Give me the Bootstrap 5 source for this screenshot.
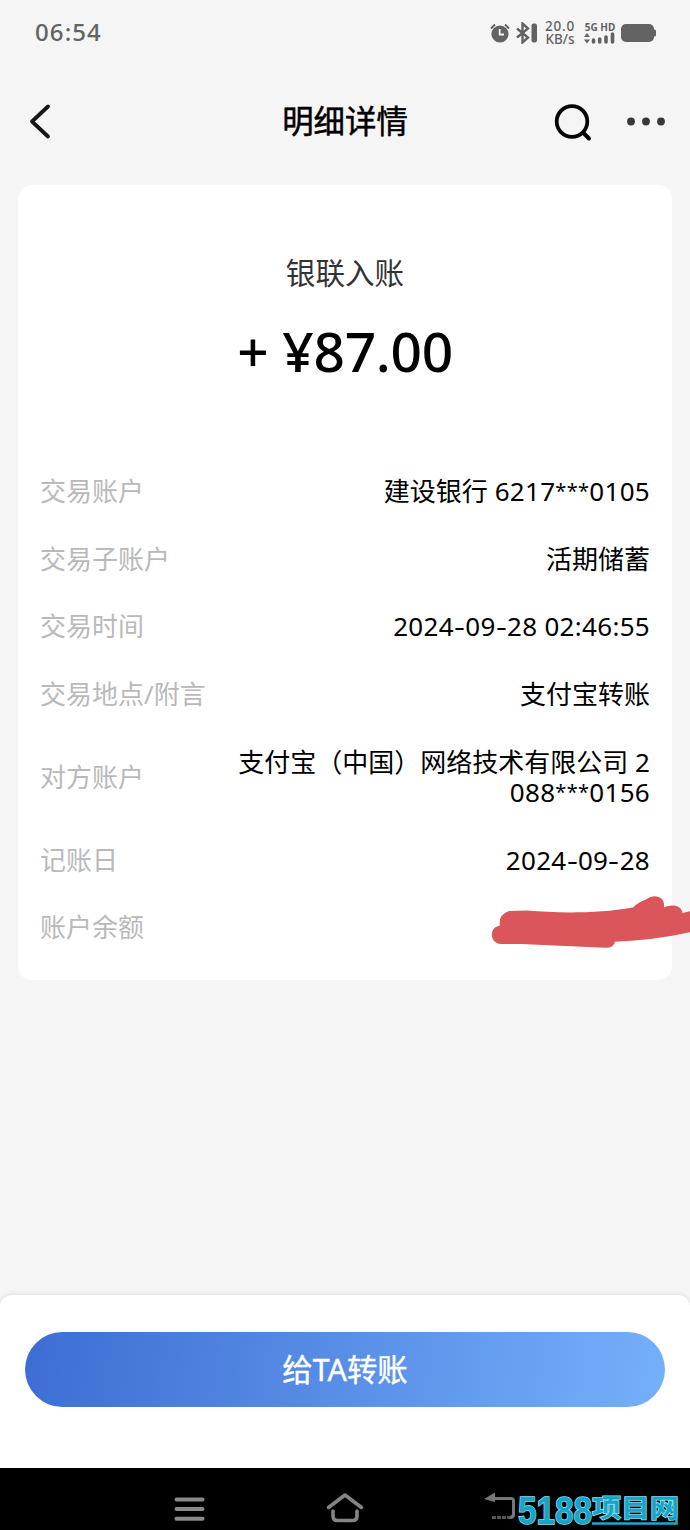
<!DOCTYPE html>
<html lang="zh-CN">
<head>
<meta charset="utf-8">
<meta name="viewport" content="width=device-width, initial-scale=1">
<title>明细详情</title>
<link href="https://cdn.jsdelivr.net/npm/bootstrap@5.3.0/dist/css/bootstrap.min.css" rel="stylesheet">
<style>
body{background:#f5f5f5;color:#000;font-family:"Noto Sans","Noto Sans CJK SC",sans-serif;font-size:26px;line-height:30.5px}
svg{display:block;flex:none}
.screen{height:1530px}
.status-bar{height:65px;padding:0 33px 0 35px;color:#636363}
.clock{font-size:24px;font-weight:500;letter-spacing:1.1px}
.speed{font-size:13.5px;line-height:12.5px;font-weight:500;width:34px}
.speed div:first-child{letter-spacing:.8px}
.net{font:700 10px/10px "Noto Sans",sans-serif;width:34px}
.title-bar{height:120px;padding:0 23px 0 28px}
.page-title{font-size:31.4px;font-weight:400;line-height:40px;top:36px;-webkit-text-stroke:.5px #000}
.detail{width:654px;height:795px;border:0;border-radius:14px;padding:67px 22px 0}
.kind{font-size:29.6px;line-height:42px;color:#333}
.amount{font-size:55px;line-height:70px;font-weight:500;margin-top:22px;white-space:pre;letter-spacing:-.3px}
.rows{margin-top:71.7px}
.item{padding:18.55px 0}
.item dt{font-weight:400;color:#b9b9b9}
.item dd{margin:0;white-space:nowrap}
.num{letter-spacing:.3px}
.num i{font-style:normal;font-size:20px;line-height:1;position:relative;top:-3px}
.num b{font-weight:400;display:inline-block;width:11.4px;text-align:center;transform:scaleX(1.3)}
.scribble{left:473px;top:711px}
.action{height:173px;border-radius:12px 12px 0 0;padding:37px 25px 0;box-shadow:0 -1px 5px rgba(0,0,0,.09)}
.transfer{height:75px;font-size:30.400px;line-height:40px;padding:0;color:#fff;background:linear-gradient(98deg,#3d6dd3,#75b0fb);border:0;-webkit-text-stroke:.4px #fff}
.keys{height:62px}
.brand{left:517px;top:23px}
</style>
</head>
<body>
<div class="screen d-flex flex-column position-relative overflow-hidden">
  <header class="status-bar d-flex align-items-center justify-content-between">
    <span class="clock">06:54</span>
    <div class="d-flex align-items-center">
      <svg width="20" height="20" viewBox="0 0 20 20"><circle cx="10" cy="11" r="8.600" fill="currentColor"/><path d="M1 5.500 5 1.500M19 5.500 15 1.500" stroke="currentColor" stroke-width="2"/><path d="M9.700 6v5.500H14" fill="none" stroke="#f5f5f5" stroke-width="1.800"/></svg>
      <svg style="margin-left:5px" width="23" height="22" viewBox="0 0 23 22"><path d="m2 6.500 11 9-5.500 5V1.500l5.500 5-11 9" fill="none" stroke="currentColor" stroke-width="2.400"/><rect x="16.500" y="1.500" width="5.500" height="19" rx="2" fill="currentColor"/></svg>
      <div class="speed text-center" style="margin-left:5px"><div>20.0</div><div>KB/s</div></div>
      <div class="net" style="margin:0 4px 0 6px"><div class="text-nowrap text-center">5G HD</div>
        <svg width="34" height="12" viewBox="0 0 34 12"><path d="m1 5 3-4 3 4ZM1 7.500h6l-3 4Z" fill="currentColor"/><path d="M10.500 8v2M16.700 7v3M23 5v5M29.500 2v8" stroke="currentColor" stroke-width="3.600" stroke-linecap="round"/></svg></div>
      <svg width="36" height="20" viewBox="0 0 36 20"><rect x="0" y="1" width="33" height="18" rx="5" fill="currentColor"/><rect x="31" y="6.500" width="4" height="7" rx="1.500" fill="currentColor"/></svg>
    </div>
  </header>
  <nav class="title-bar d-flex align-items-start position-relative">
    <svg style="margin-top:37px" width="24" height="38" viewBox="0 0 24 38"><path d="M20 4.500 4 19.500 20 34.500" fill="none" stroke="#171717" stroke-width="3.800" stroke-linecap="round" stroke-linejoin="round"/></svg>
    <h1 class="page-title position-absolute start-0 end-0 text-center mb-0">明细详情</h1>
    <svg class="ms-auto" style="margin-top:37px" width="40" height="40" viewBox="0 0 40 40"><circle cx="20" cy="19.500" r="15.300" fill="none" stroke="#050505" stroke-width="3.800"/><path d="m31.500 31 5.500 5.500" stroke="#050505" stroke-width="4" stroke-linecap="round"/></svg>
    <svg style="margin:51px 0 0 33px" width="42" height="12" viewBox="0 0 42 12"><g fill="#383838"><circle cx="6" cy="5.500" r="3.900"/><circle cx="21" cy="5.500" r="3.900"/><circle cx="36" cy="5.500" r="3.900"/></g></svg>
  </nav>
  <main class="detail card mx-auto">
    <div class="kind text-center">银联入账</div>
    <div class="amount text-center">+ ¥87.00</div>
    <dl class="rows mb-0">
      <div class="item d-flex justify-content-between align-items-center"><dt>交易账户</dt><dd>建设银行 <span class="num">6217<i>***</i>0105</span></dd></div>
      <div class="item d-flex justify-content-between align-items-center"><dt>交易子账户</dt><dd>活期储蓄</dd></div>
      <div class="item d-flex justify-content-between align-items-center"><dt>交易时间</dt><dd><span class="num">2024<b>-</b>09<b>-</b>28 02:46:55</span></dd></div>
      <div class="item d-flex justify-content-between align-items-center"><dt>交易地点/附言</dt><dd>支付宝转账</dd></div>
      <div class="item d-flex justify-content-between align-items-center"><dt>对方账户</dt><dd class="text-end">支付宝（中国）网络技术有限公司 2<br><span class="num">088<i>***</i>0156</span></dd></div>
      <div class="item d-flex justify-content-between align-items-center"><dt>记账日</dt><dd><span class="num">2024<b>-</b>09<b>-</b>28</span></dd></div>
      <div class="item d-flex justify-content-between align-items-center"><dt>账户余额</dt><dd></dd></div>
    </dl>
    <svg class="scribble position-absolute" width="200" height="54" viewBox="0 0 200 54"><path d="M18 15 36 14.500C65 17 105 18 142 11.500Q147 6 156 3C162-2 174 0 173 10V11.500C181 8 190 9 191.500 17L202 14.500V35.500Q165 44 124 45.700Q123 52 114 51.700L30 48H10C-2 47-2 31 9 29.500Q7 19 18 15Z" fill="#da565b"/></svg>
  </main>
  <footer class="mt-auto">
    <div class="action bg-white">
      <button class="transfer btn rounded-pill w-100 d-flex align-items-center justify-content-center" type="button">给TA转账</button>
    </div>
    <div class="keys bg-black position-relative d-flex">
      <svg style="margin:26px 0 0 172px" width="34" height="30" viewBox="0 0 34 30"><path d="M4.500 5.500h26M4.500 15h26M4.500 24.800h26" stroke="#898989" stroke-width="4" stroke-linecap="round"/></svg>
      <svg style="margin:22px 0 0 119px" width="42" height="36" viewBox="0 0 42 36"><path d="M3.500 17.500 20 5l16.500 12.500M8 21v5q0 4.500 4.500 4.500h15Q32 30.500 32 26v-5" fill="none" stroke="#858383" stroke-width="3.600" stroke-linecap="round" stroke-linejoin="round"/></svg>
      <svg style="margin:24px 0 0 117px" width="34" height="32" viewBox="0 0 34 32"><path d="m0 7 11-6.500V5h16q4 0 4 4v14q0 4-5 4v-3q2 0 2-3V8H11v2Z" fill="#777"/><path d="M8 25.500h18" stroke="#555" stroke-width="3" stroke-dasharray="4 1"/></svg>
      <svg class="brand position-absolute" width="165" height="39" viewBox="0 0 165 39"><g fill="#18a4c9" stroke="#8be3f3" stroke-width="1.500" paint-order="stroke"><text x="1" y="33" font-family="Liberation Sans" font-weight="700" font-size="38" textLength="74" lengthAdjust="spacingAndGlyphs">5188</text><text x="75" y="26" font-family="Noto Sans CJK SC" font-weight="700" font-size="25" textLength="87" lengthAdjust="spacingAndGlyphs">项目网</text></g><path d="M75 32.500h84.500V24" fill="none" stroke="#1bacce" stroke-width="2.500"/></svg>
    </div>
  </footer>
</div>
<script src="https://cdn.jsdelivr.net/npm/bootstrap@5.3.0/dist/js/bootstrap.bundle.min.js"></script>
</body>
</html>
